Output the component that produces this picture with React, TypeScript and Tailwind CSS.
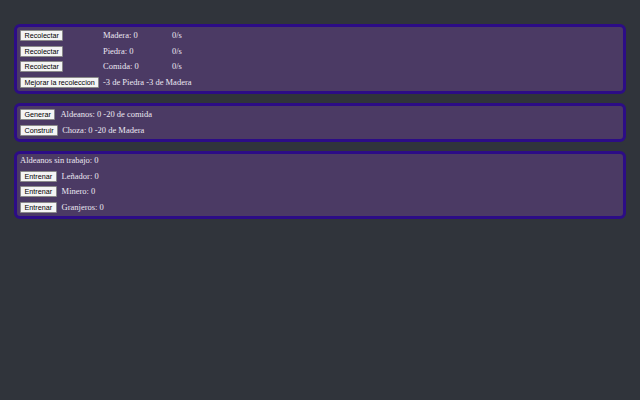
import React from "react";

const Btn = ({ label }: { label: string }) => (
    <button
        type="button"
        className="h-[11px] px-[3.5px] bg-[#f4f4f4] border border-[#8a8a8a] rounded-[1px] text-black text-[7.2px] leading-none font-['Liberation_Sans',Arial,sans-serif] whitespace-nowrap"
    >
        {label}
    </button>
);

const Panel = ({ children }: { children: React.ReactNode }) => (
    <div className="mx-[14px] border-[3px] border-[#2c0c86] rounded-[6px] bg-[#4b3a64] px-[3px] py-[1px]">
        {children}
    </div>
);

export default function App() {
    const recursos = [
        { name: "Madera", value: 0 },
        { name: "Piedra", value: 0 },
        { name: "Comida", value: 0 },
    ];
    const trabajos = ["Leñador", "Minero", "Granjeros"];

    return (
        <div className="w-[640px] h-[400px] bg-[#30343b] pt-[24px] flex flex-col gap-[9px] text-[#ece8f2] text-[8.5px] font-['Liberation_Serif','Times_New_Roman',serif]">
            <Panel>
                <div className="grid grid-cols-[83px_69px_1fr]">
                    {recursos.map((r) => (
                        <React.Fragment key={r.name}>
                            <div className="h-[15.5px] flex items-center"><Btn label="Recolectar" /></div>
                            <div className="h-[15.5px] flex items-center">{r.name}: {r.value}</div>
                            <div className="h-[15.5px] flex items-center">0/s</div>
                        </React.Fragment>
                    ))}
                    <div className="h-[15.5px] flex items-center"><Btn label="Mejorar la recoleccion" /></div>
                    <div className="h-[15.5px] flex items-center col-span-2">-3 de Piedra -3 de Madera</div>
                </div>
            </Panel>
            <Panel>
                <div className="h-[15.5px] flex items-center gap-[5px]"><Btn label="Generar" /><span>Aldeanos: 0 -20 de comida</span></div>
                <div className="h-[15.5px] flex items-center gap-[4px]"><Btn label="Construir" /><span>Choza: 0 -20 de Madera</span></div>
            </Panel>
            <Panel>
                <div className="h-[13.5px] leading-[10px]">Aldeanos sin trabajo: 0</div>
                {trabajos.map((t) => (
                    <div key={t} className="h-[15.5px] flex items-center gap-[5px]"><Btn label="Entrenar" /><span>{t}: 0</span></div>
                ))}
            </Panel>
        </div>
    );
}
